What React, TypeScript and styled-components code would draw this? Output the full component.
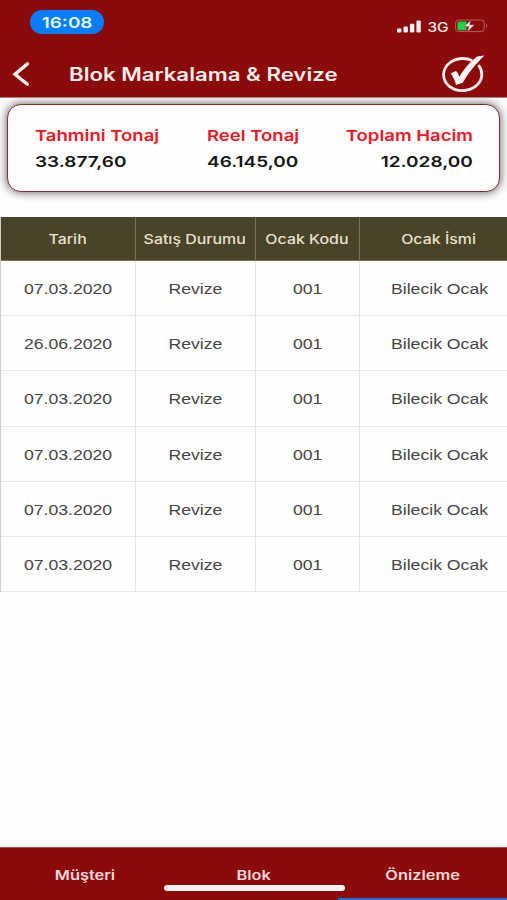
import React from 'react';
import styled, { createGlobalStyle } from 'styled-components';

const RED = '#8b0b0b';

const GlobalStyle = createGlobalStyle`
  * { box-sizing: border-box; }
  body { margin: 0; background: #fefefe; overflow: hidden; }
`;

const Screen = styled.div`
  width: 507px;
  height: 900px;
  display: flex;
  flex-direction: column;
  overflow: hidden;
  background: #fefefe;
  font-family: Inter, "Liberation Sans", sans-serif;
`;

const Wide = styled.span<{ $scale: number; $origin?: string }>`
  display: inline-block;
  white-space: nowrap;
  transform: scaleX(${p => p.$scale});
  transform-origin: ${p => p.$origin ?? 'center'};
`;

const Header = styled.header`
  height: 98px;
  flex: none;
  background: ${RED};
  border-bottom: 1px solid #a58581;
  color: #ffeceb;
`;

const StatusBar = styled.div`
  height: 50px;
  padding: 10px 19px 0 30px;
  display: flex;
  justify-content: space-between;
  align-items: flex-start;
`;

const TimePill = styled.div`
  width: 74px;
  height: 24px;
  border-radius: 12px;
  background: #087dfb;
  color: #e6fbff;
  display: flex;
  align-items: center;
  justify-content: center;
  font-size: 15px;
  font-weight: 600;
`;

const Indicators = styled.div`
  display: flex;
  align-items: center;
  height: 20px;
  margin-top: 6px;
`;

const Network = styled.span`
  width: 22px;
  margin: 0 6px 0 6px;
  padding-top: 1px;
  font-size: 13px;
  font-weight: 500;
  display: flex;
  justify-content: center;
`;

const TitleBar = styled.div`
  height: 47px;
  padding: 0 20px 0 12px;
  display: flex;
  align-items: center;
`;

const Title = styled.h1`
  margin: 0 0 0 38px;
  padding-top: 2px;
  flex: 1;
  font-size: 18px;
  line-height: 24px;
  font-weight: 600;
`;

const Content = styled.main`
  flex: 1;
  min-height: 0;
  overflow: hidden;
`;

const Summary = styled.section`
  margin: 6px 7px 0;
  height: 88px;
  padding: 2px 26px 0 27px;
  display: grid;
  grid-template-columns: 172px 1fr 128px;
  align-content: center;
  border: 1.5px solid #8f2a2b;
  border-radius: 14px;
  background: #fefefe;
  box-shadow: 0 0 8px 1px rgba(40, 30, 30, 0.65);
`;

const Stat = styled.div<{ $end?: boolean }>`
  display: flex;
  flex-direction: column;
  align-items: ${p => (p.$end ? 'flex-end' : 'flex-start')};
  font-size: 15px;
  line-height: 26px;
`;

const StatLabel = styled.div`
  color: #f5141e;
  font-weight: 600;
`;

const StatValue = styled.div`
  color: #151515;
  font-weight: 600;
`;

const Table = styled.div`
  margin-top: 25px;
  width: 520px;
  border-left: 1.5px solid #cfcfcf;
`;

const Row = styled.div`
  display: grid;
  grid-template-columns: 135px 120px 104px 160px;
  height: 55.2px;
  border-bottom: 1px solid #e8e8e8;
`;

const HeadRow = styled(Row)`
  height: 44px;
  background: #494327;
  border-bottom: 1px solid #77735f;
`;

const Cell = styled.div`
  display: flex;
  align-items: center;
  justify-content: center;
  padding-top: 2px;
  border-right: 1px solid #e3e3e3;
  font-family: "Liberation Sans", Arial, sans-serif;
  font-size: 14px;
  color: #454545;
`;

const HeadCell = styled(Cell)`
  padding: 1px 1px 0 0;
  border-right-color: #77735a;
  font-family: Inter, sans-serif;
  font-size: 13px;
  font-weight: 500;
  color: #e6e1cd;
`;

const TabBar = styled.nav`
  position: relative;
  height: 53px;
  flex: none;
  display: grid;
  grid-template-columns: repeat(3, 1fr);
  background: ${RED};
  border-top: 1px solid #b04c4c;
`;

const Tab = styled.div<{ $active?: boolean }>`
  display: flex;
  justify-content: center;
  align-items: center;
  padding-top: 3px;
  font-size: 13px;
  font-weight: 600;
  color: #ffd9d8;
  border-bottom: 2px solid ${p => (p.$active ? '#1e6fd0' : 'transparent')};
`;

const HomeIndicator = styled.div`
  position: absolute;
  left: 164px;
  top: 37px;
  width: 181px;
  height: 6px;
  border-radius: 3px;
  background: #fff4f3;
`;

const SignalIcon = () => (
  <svg width="24" height="13" viewBox="0 0 24 13" fill="#fff0ef">
    <rect x="0" y="8.5" width="4.4" height="4" rx="1" />
    <rect x="6.5" y="6.5" width="4.4" height="6" rx="1" />
    <rect x="12.9" y="3.8" width="4.4" height="8.7" rx="1" />
    <rect x="19.4" y="0.6" width="4.4" height="11.9" rx="1" />
  </svg>
);

const BatteryIcon = () => (
  <svg width="33" height="14" viewBox="0 0 33 14">
    <rect x="0.6" y="1" width="28.6" height="11.6" rx="3" fill="none" stroke="#b8605c" strokeWidth="1" />
    <path d="M31 5v4c1.6-.6 1.6-3.4 0-4z" fill="#b8605c" />
    <path d="M4 2.4h7.6v8.8H4a1.6 1.6 0 0 1-1.6-1.6V4A1.6 1.6 0 0 1 4 2.4z" fill="#16d34a" />
    <path d="M16 1L9.2 7.6h4.6L12.2 13l7.4-7.2h-5z" fill="#fff4f3" stroke={RED} strokeWidth="0.4" />
  </svg>
);

const BackIcon = () => (
  <svg width="19" height="26" viewBox="0 0 19 26" fill="none" stroke="#fff0ef" strokeWidth="3.4" strokeLinecap="round" strokeLinejoin="miter">
    <path d="M15.4 2.9L3 13.2L15.4 23.3" />
  </svg>
);

const CheckIcon = () => (
  <svg width="46" height="40" viewBox="0 0 46 40">
    <path
      d="M31 6.6C28 5.1 24.8 4.4 21 4.5C10.6 5 2.6 12 2.6 20.8C2.6 29.8 11 36.6 21.4 36.6C32 36.6 40.8 29.5 40.8 20.6C40.8 17 39.6 13.8 37.4 11.2"
      fill="none"
      stroke="#ffeceb"
      strokeWidth="2.8"
    />
    <path
      d="M9.6 19.6L14.8 17C16.8 18.2 17.6 20 18.2 22.8C23 14.5 29.2 7.8 36 2.4L43.6 1.6C34 10.4 27.2 19.4 21.8 28.8L15 31C14 26.6 12.2 23 9.6 19.6Z"
      fill="#fff4f3"
    />
  </svg>
);

const stats = [
  { label: 'Tahmini Tonaj', value: '33.877,60' },
  { label: 'Reel Tonaj', value: '46.145,00' },
  { label: 'Toplam Hacim', value: '12.028,00', end: true },
];

const columns = ['Tarih', 'Satış Durumu', 'Ocak Kodu', 'Ocak İsmi'];
const dates = ['07.03.2020', '26.06.2020', '07.03.2020', '07.03.2020', '07.03.2020', '07.03.2020'];
const rows = dates.map(date => [date, 'Revize', '001', 'Bilecik Ocak']);

export default function App() {
  return (
    <Screen>
      <GlobalStyle />
      <Header>
        <StatusBar>
          <TimePill><Wide $scale={1.26}>16:08</Wide></TimePill>
          <Indicators>
            <SignalIcon />
            <Network><Wide $scale={1.18}>3G</Wide></Network>
            <BatteryIcon />
          </Indicators>
        </StatusBar>
        <TitleBar>
          <BackIcon />
          <Title><Wide $scale={1.235} $origin="left">Blok Markalama &amp; Revize</Wide></Title>
          <CheckIcon />
        </TitleBar>
      </Header>
      <Content>
        <Summary>
          {stats.map(s => (
            <Stat key={s.label} $end={s.end}>
              <StatLabel><Wide $scale={1.235} $origin={s.end ? 'right' : 'left'}>{s.label}</Wide></StatLabel>
              <StatValue><Wide $scale={1.265} $origin={s.end ? 'right' : 'left'}>{s.value}</Wide></StatValue>
            </Stat>
          ))}
        </Summary>
        <Table>
          <HeadRow>
            {columns.map(c => <HeadCell key={c}><Wide $scale={1.225}>{c}</Wide></HeadCell>)}
          </HeadRow>
          {rows.map((r, i) => (
            <Row key={i}>
              {r.map(v => <Cell key={v}><Wide $scale={1.26}>{v}</Wide></Cell>)}
            </Row>
          ))}
        </Table>
      </Content>
      <TabBar>
        <Tab><Wide $scale={1.26}>Müşteri</Wide></Tab>
        <Tab><Wide $scale={1.26}>Blok</Wide></Tab>
        <Tab $active><Wide $scale={1.26}>Önizleme</Wide></Tab>
        <HomeIndicator />
      </TabBar>
    </Screen>
  );
}
